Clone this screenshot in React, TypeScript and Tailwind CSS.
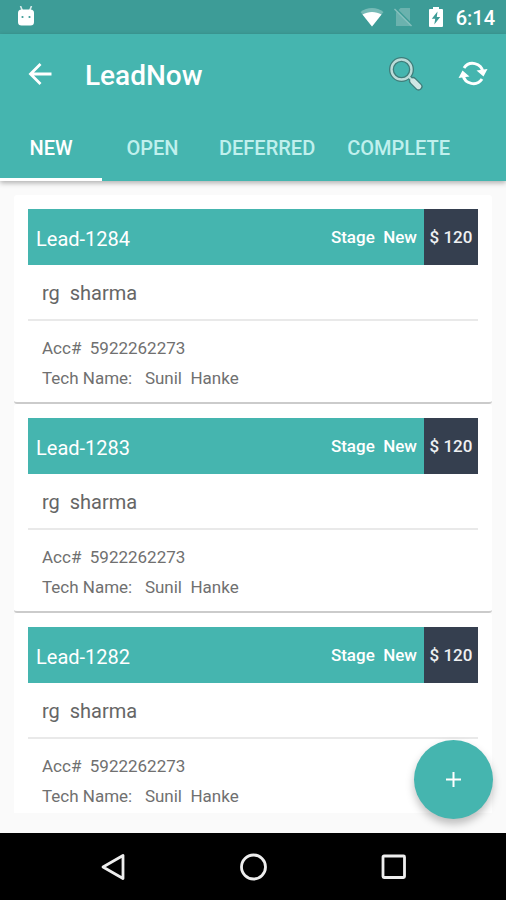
import React from 'react';

type Lead = {
  id: string;
  customer: string;
  stage: string;
  price: string;
  account: string;
  tech: string;
};

const leads: Lead[] = [
  { id: 'Lead-1284', customer: 'rg  sharma', stage: 'New', price: '$ 120', account: '5922262273', tech: 'Sunil  Hanke' },
  { id: 'Lead-1283', customer: 'rg  sharma', stage: 'New', price: '$ 120', account: '5922262273', tech: 'Sunil  Hanke' },
  { id: 'Lead-1282', customer: 'rg  sharma', stage: 'New', price: '$ 120', account: '5922262273', tech: 'Sunil  Hanke' },
];

const tabs = ['NEW', 'OPEN', 'DEFERRED', 'COMPLETE'];

const StatusBar = () => {
  return (
    <div className="h-[34px] shrink-0 bg-[#3d9c97] text-white flex items-center justify-between pl-4 pr-[11px]">
      {/* Android head */}
      <svg width="20" height="22" viewBox="0 2 20 22" fill="none">
        <path d="M4.500 2l2 5M15.500 2l-2 5" stroke="#fff" strokeOpacity="0.8" strokeWidth="1.600" />
        <rect x="2" y="5.500" width="16" height="16" rx="3.500" fill="#fff" />
        <circle cx="6.500" cy="13" r="1.100" fill="#3d9c97" />
        <circle cx="13.500" cy="13" r="1.100" fill="#3d9c97" />
      </svg>
      <div className="flex items-center">
        {/* Wifi */}
        <svg width="24" height="20" viewBox="0 0 24 20">
          <path d="M0.500 5C7 -0.500 17 -0.500 23.500 5L12 19.500z" fill="#fff" fillOpacity="0.3" />
          <path d="M2.500 7.500C8 4 16 4 21.500 7.500L12 19.500z" fill="#fff" />
        </svg>
        {/* No sim */}
        <svg className="ml-[9px]" width="20" height="20" viewBox="0 0 20 20">
          <path d="M7.500 1H17v18H3V5.500z" fill="#6bb2ae" />
          <path d="M2.500 1L19 17.500" stroke="#3d9c97" strokeWidth="1.600" />
          <path d="M1.500 2L18.500 19" stroke="#86c0bd" strokeWidth="1.400" />
        </svg>
        {/* Battery */}
        <svg className="ml-[15px]" width="16" height="22" viewBox="0 0 16 22">
          <path d="M5 1h6v2h3a1 1 0 0 1 1 1v16a1 1 0 0 1-1 1H2a1 1 0 0 1-1-1V4a1 1 0 0 1 1-1h3z" fill="#fff" />
          <path d="M9.500 5.500L3.800 12.800H7.200L6.300 18.500L12.200 11H8.800z" fill="#3d9c97" />
        </svg>
        <span className="ml-3 pt-[2px] text-[20px] leading-6 font-medium">6:14</span>
      </div>
    </div>
  );
};

const Header = () => {
  return (
    <header className="relative z-10 shrink-0 bg-[#45b5af] text-white shadow-[0_2px_5px_rgba(0,0,0,0.3)]">
      <div className="h-20 flex items-center pl-7 pr-[18px]">
        <button type="button" aria-label="Back">
          <svg width="24" height="24" viewBox="0 0 24 24" fill="none" stroke="#fff" strokeWidth="2.800">
            <path d="M23.500 12H3M12.500 2L2.500 12L12.500 22" />
          </svg>
        </button>
        <h1 className="ml-[33px] flex-1 pt-[3px] text-[28px] leading-8 font-medium">LeadNow</h1>
        <button type="button" aria-label="Search">
          <svg width="36" height="36" viewBox="0 0 36 36" fill="none">
            <path d="M25 25L30.500 30.500" stroke="#3f7d7a" strokeWidth="8" strokeLinecap="round" />
            <path d="M21 21L25 25" stroke="#3f7d7a" strokeWidth="4" />
            <circle cx="13.500" cy="13.500" r="10" stroke="#3f7d7a" strokeWidth="5" />
            <circle cx="13.500" cy="13.500" r="10" stroke="#bcdcd9" strokeWidth="2.400" />
            <path d="M21 21L24 24" stroke="#bcdcd9" strokeWidth="2" />
            <path d="M25 25L30.500 30.500" stroke="#cfe6e4" strokeWidth="5.400" strokeLinecap="round" />
          </svg>
        </button>
        <button type="button" aria-label="Refresh" className="ml-[34px]">
          <svg width="30" height="26" viewBox="0 0 30 26" fill="none">
            <path d="M6 7A10.500 10.500 0 0 1 25 11M24 18A10.500 10.500 0 0 1 5 14" stroke="#fff" strokeWidth="3" />
            <path d="M18.500 9.500L29.500 8L25.500 15.500zM11.500 15.500L0.500 17L4.500 9.500z" fill="#fff" />
          </svg>
        </button>
      </div>
      <nav role="tablist" className="flex h-[67px]">
        {tabs.map((tab, i) => (
          <button
            key={tab}
            type="button"
            role="tab"
            aria-selected={i === 0}
            className={
              i === 0
                ? 'min-w-[102px] px-4 text-[20px] font-medium text-white border-b-3 border-white pt-[3px]'
                : 'min-w-[101px] px-4 text-[20px] font-medium text-[#c0f0ed] border-b-3 border-transparent pt-[3px]'
            }
          >
            {tab}
          </button>
        ))}
      </nav>
    </header>
  );
};

const LeadCard = ({ lead }: { lead: Lead }) => {
  return (
    <li className="shrink-0 bg-white rounded-[3px] border-b-2 border-[#cbcbcb] px-[14px] pt-[14px] pb-[9px]">
      <div className="flex h-14 bg-[#45b5af] text-white">
        <h2 className="flex-1 pl-2 pt-1 text-[20px] leading-[52px]">{lead.id}</h2>
        <span className="pr-[7px] text-[17px] leading-[56px] font-medium whitespace-pre">{`Stage  ${lead.stage}`}</span>
        <span className="w-[54px] bg-[#353f4f] text-center text-[17px] leading-[56px] font-medium text-[#eef0f2]">{lead.price}</span>
      </div>
      <p className="h-14 pl-[14px] border-b-2 border-[#e9e9e9] text-[20px] leading-[56px] text-[#666] whitespace-pre">{lead.customer}</p>
      <div className="pl-[14px] pt-3 text-[17px] leading-[30px] text-[#707070] whitespace-pre">
        <p>{`Acc#  ${lead.account}`}</p>
        <p>{`Tech Name:   ${lead.tech}`}</p>
      </div>
    </li>
  );
};

const NavBar = () => {
  return (
    <footer className="h-[67px] shrink-0 bg-black flex items-center justify-center gap-[112px]">
      <button type="button" aria-label="Back">
        <svg width="28" height="28" viewBox="0 0 28 28" fill="none" stroke="#eee" strokeWidth="2.800" strokeLinejoin="round">
          <path d="M24 2.500V25.500L4 14z" />
        </svg>
      </button>
      <button type="button" aria-label="Home">
        <svg width="28" height="28" viewBox="0 0 28 28" fill="none" stroke="#eee" strokeWidth="2.800">
          <circle cx="14.500" cy="14" r="12" />
        </svg>
      </button>
      <button type="button" aria-label="Recent apps">
        <svg width="28" height="28" viewBox="0 0 28 28" fill="none" stroke="#eee" strokeWidth="2.800">
          <rect x="4" y="3" width="21.500" height="21.500" rx="1" />
        </svg>
      </button>
    </footer>
  );
};

const App = () => {
  return (
    <div className="h-screen flex flex-col bg-[#fafafa] font-[Roboto,sans-serif]">
      <StatusBar />
      <Header />
      <main className="relative flex-1 min-h-0 flex flex-col px-[14px] pt-[14px] pb-5">
        <ul className="flex-1 min-h-0 flex flex-col overflow-hidden">
          {leads.map((lead) => (
            <LeadCard key={lead.id} lead={lead} />
          ))}
        </ul>
        <button
          type="button"
          aria-label="Add lead"
          className="absolute right-[13px] bottom-[14px] size-[79px] rounded-full bg-[#45b5af] flex items-center justify-center shadow-[0_5px_9px_rgba(0,0,0,0.25)]"
        >
          <svg width="15" height="15" viewBox="0 0 15 15" stroke="#fff" strokeWidth="2">
            <path d="M7.500 0V15M0 7.500H15" />
          </svg>
        </button>
      </main>
      <NavBar />
    </div>
  );
};

export default App;
